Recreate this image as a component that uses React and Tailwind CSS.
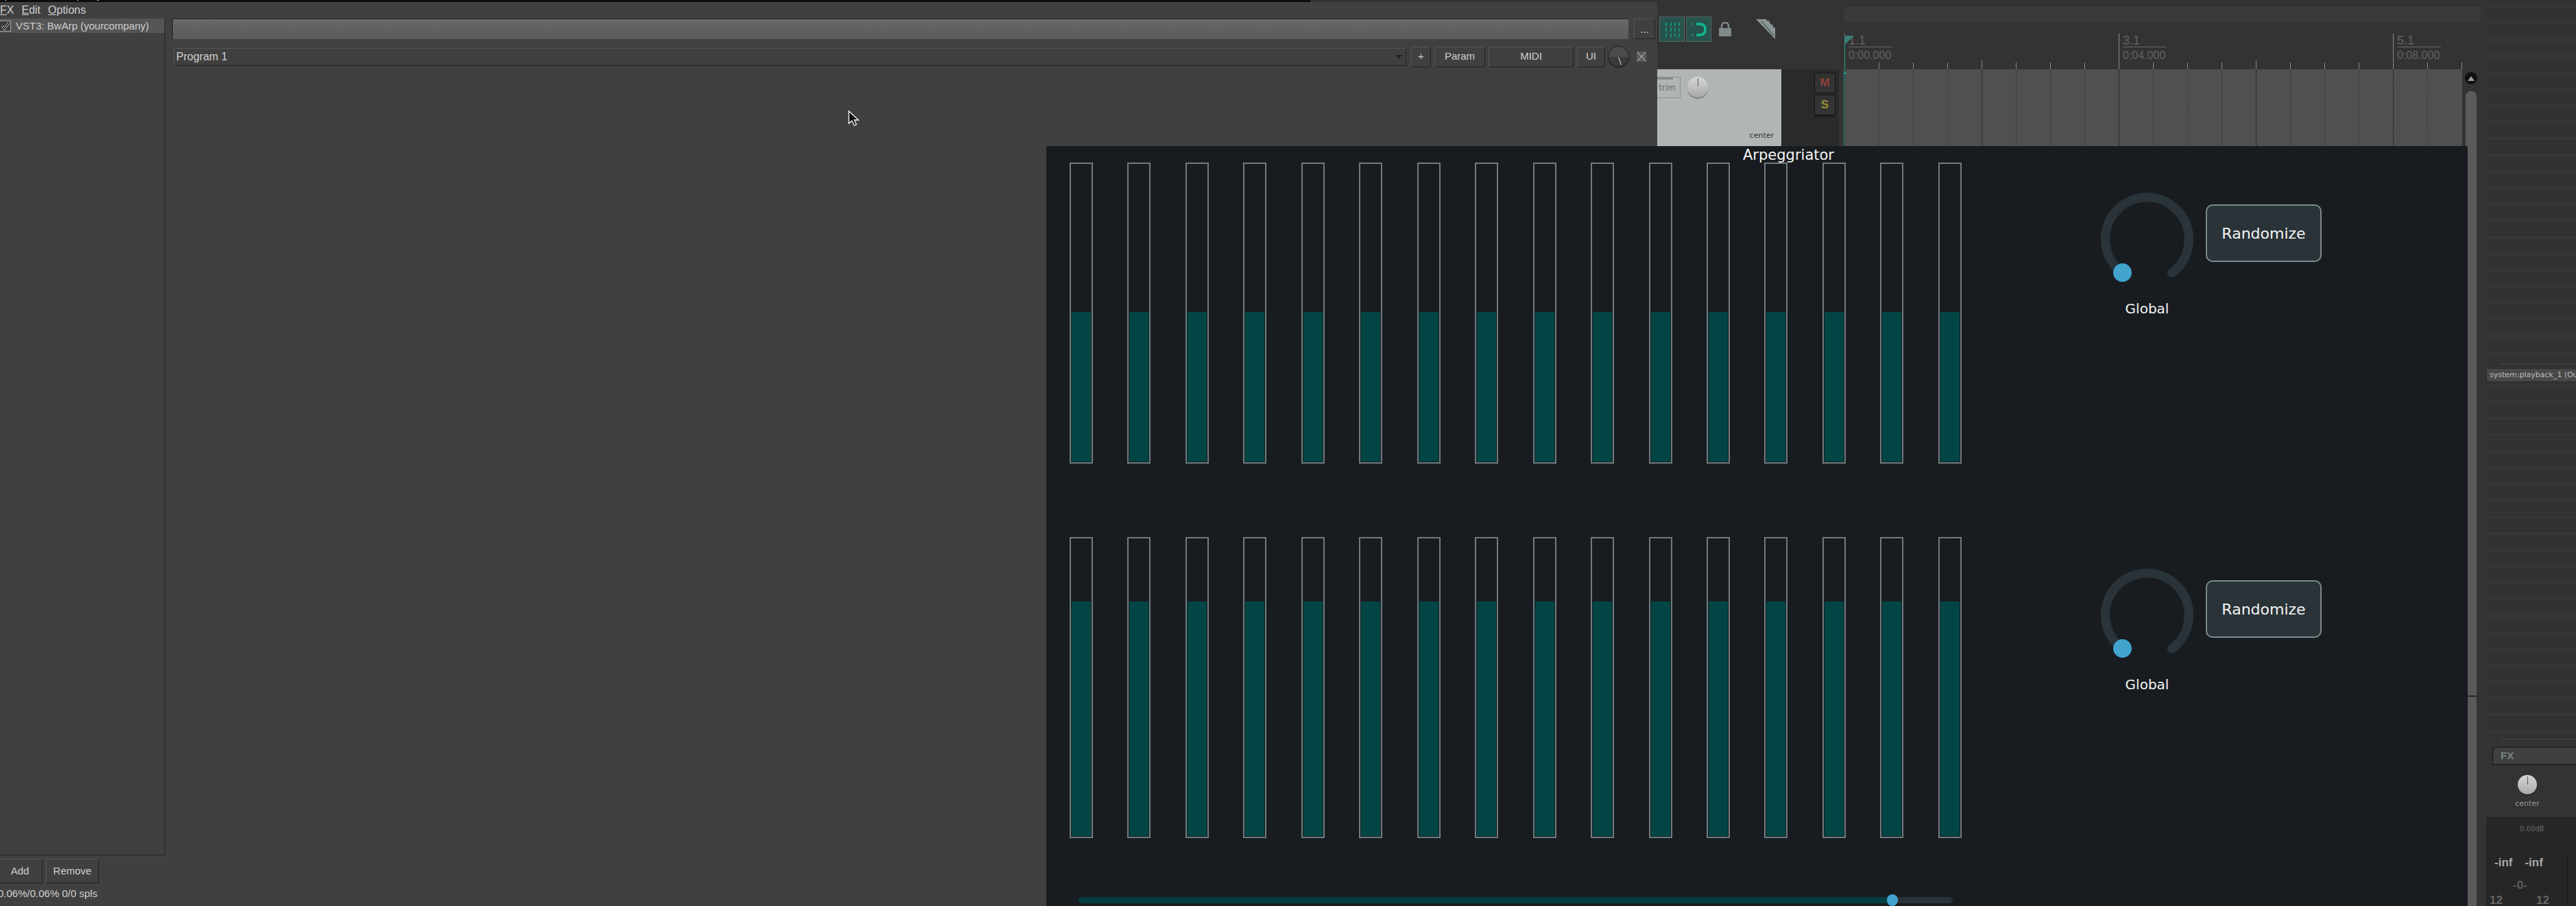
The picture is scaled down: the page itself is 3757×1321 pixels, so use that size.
const ticks = Array.from({ length: 19 }, (_, i) => i);
const bars = Array.from({ length: 16 }, (_, i) => i);
const labels = {
  0: ['1.1', '0:00.000'],
  8: ['3.1', '0:04.000'],
  16: ['5.1', '0:08.000'],
};

function Btn({ className, children }) {
  return (
    <div className={`flex items-center justify-center border border-t-[#555] border-l-[#555] border-r-[#222] border-b-[#222] bg-[#404040] text-[15px] text-[#d0d0d0] ${className}`}>
      {children}
    </div>
  );
}

function Knob({ className, line }) {
  return (
    <div className={`relative rounded-full bg-gradient-to-b from-[#d6d6d6] to-[#a9a9a9] shadow-[0_2px_1px_#2226] ${className}`}>
      <div className={`absolute left-1/2 top-[2px] h-[12px] w-px ${line}`} />
    </div>
  );
}

function RulerCell({ i }) {
  const label = labels[i];
  if (label) {
    return (
      <div className={`relative h-[52px] w-[50px] shrink-0 border-l ${i === 0 ? 'border-[#777]' : 'border-[#8a8a8a]'}`}>
        <div className="pl-[5px] pt-[1px] whitespace-nowrap font-['Liberation_Sans',sans-serif] text-[#626262]">
          <div className="h-[18px] text-[18px] leading-[18px]">{label[0]}</div>
          <div className="h-px w-[64px] bg-[#686868]" />
          <div className="mt-[4px] text-[16px] leading-[16px]">{label[1]}</div>
        </div>
        {i === 0 && (
          <>
            <div className="absolute -left-px top-[16px] h-[36px] w-px bg-[#1fa08c]" />
            <svg className="absolute -left-px top-[3px]" width="14" height="14" viewBox="0 0 14 14">
              <path d="M0 0H14L0 14Z" fill="#3b7f75" />
            </svg>
          </>
        )}
      </div>
    );
  }
  return <div className={`w-[50px] shrink-0 border-l border-[#8a8a8a] ${i % 4 === 0 ? 'h-[13px]' : 'h-[10px]'}`} />;
}

function Toolbar() {
  return (
    <div className="flex h-[101px] items-start pl-[3px] pt-[24px]">
      <div className="flex h-[37px] w-[37px] items-center justify-center border border-[#56635f] bg-[#27534c]">
        <svg width="24" height="24" viewBox="0 0 24 24" stroke="#17a387" strokeWidth="1.5" strokeDasharray="5 3">
          <path d="M3 2V23M10 2V23M16 2V23M22 2V23" />
        </svg>
      </div>
      <div className="ml-[2px] flex h-[37px] w-[37px] items-center justify-center border border-[#56635f] bg-[#27534c]">
        <svg width="26" height="26" viewBox="0 0 26 26" fill="none" stroke="#12b892" strokeWidth="3.5">
          <path d="M3 5H4M3 21H4M9 5H14Q22 5 22 13Q22 21 14 21H9" />
        </svg>
      </div>
      <svg className="ml-[11px] mt-[8px]" width="18" height="21" viewBox="0 0 18 21">
        <path d="M4 10V6A5 5 0 0 1 14 6V10" fill="none" stroke="#808a8a" strokeWidth="2.5" />
        <rect x="0" y="9" width="18" height="12" fill="#808a8a" />
      </svg>
      <svg className="ml-[36px] mt-[4px]" width="28" height="29" viewBox="0 0 28 29">
        <path d="M0 0H15L17 3L19 2L21 7L24 8L25 11L28 13V29Z" fill="#8a9595" />
        <path d="M8 3L26 24" stroke="#5a6262" strokeWidth="1.5" />
      </svg>
    </div>
  );
}

function TrackPanel() {
  return (
    <div className="flex h-[112px]">
      <div className="relative w-[181px] bg-[#b1b6b4] font-['DejaVu_Sans',sans-serif]">
        <div className="flex pt-[11px]">
          <div className="relative flex h-[31px] w-[34px] items-center justify-end border border-l-0 border-[#8b908e] pr-[6px] text-[12px] text-[#666b69]">
            <div className="absolute left-0 top-0 h-[3px] w-[23px] bg-[#8a8a8a]" />
            trim
          </div>
          <Knob className="ml-[10px] h-[30px] w-[30px]" line="bg-[#555]" />
        </div>
        <div className="absolute bottom-[8px] right-[11px] text-[11px] leading-[14px] text-[#333]">center</div>
      </div>
      <div className="flex w-[84px] flex-col items-end bg-[#2a2a2a] pr-[5px] pt-[5px] font-['Liberation_Sans',sans-serif] text-[17px] font-bold">
        <div className="flex h-[30px] w-[31px] items-center justify-center border border-[#141414] bg-[#333] text-[#8f423c]">M</div>
        <div className="mt-[2px] flex h-[30px] w-[31px] items-center justify-center border border-[#141414] bg-[#333] text-[#98903a] shadow-[0_3px_0_#1f1f1f]">S</div>
      </div>
      <div className="w-[8px] bg-[#333]" />
    </div>
  );
}

function Arrange() {
  return (
    <div className="w-[901px] shrink-0">
      <div className="relative h-[101px]">
        <div className="absolute left-0 top-[10px] h-[22px] w-[928px] bg-[#3a3a3a]" />
        <div className="flex h-full items-end">
          {ticks.map((i) => (
            <RulerCell key={i} i={i} />
          ))}
        </div>
      </div>
      <div className="relative flex h-[112px] bg-[#505050]">
        <div className="absolute -left-px top-0 h-full w-px bg-[#1fa08c]" />
        <div className="absolute left-0 top-[5px] h-[2px] w-[3px] bg-[#1fa08c]" />
        {ticks.slice(0, 18).map((i) => (
          <div key={i} className={`w-[50px] shrink-0 border-l border-dotted ${i % 4 === 0 ? 'border-[#111]' : 'border-[#2e2e2e]'}`} />
        ))}
      </div>
    </div>
  );
}

function Scrollbar() {
  return (
    <div className="relative ml-[5px] flex w-[16px] shrink-0 flex-col items-center pt-[105px]">
      <div className="flex h-[18px] w-[18px] shrink-0 items-center justify-center rounded-full bg-[#111]">
        <div className="h-0 w-0 border-x-[5px] border-b-[7px] border-x-transparent border-b-[#999]" />
      </div>
      <div className="mt-[10px] w-full flex-1 rounded-t-[7px] bg-[#5a5a5a]" />
      <div className="absolute -left-[8px] top-[1014px] h-[2px] w-[24px] bg-[#2a2a2a]" />
    </div>
  );
}

function Mixer() {
  return (
    <div className="ml-[14px] flex w-[131px] shrink-0 flex-col overflow-hidden font-['DejaVu_Sans',sans-serif]">
      <div className="relative h-[1077px] shrink-0 bg-[repeating-linear-gradient(180deg,#363636_8px,#363636_12px,#323232_12px,#323232_32px)]">
        <div className="absolute left-[21px] right-0 top-[530px] h-px bg-[#484848]" />
        <div className="absolute left-0 top-[537px] flex h-[20px] w-[160px] items-center whitespace-nowrap border border-[#2c2c2c] bg-[#484848] pl-[4px] text-[11px] text-[#bdbdbd]">
          system:playback_1 (Output)
        </div>
      </div>
      <div className="ml-[21px] h-px shrink-0 bg-[#484848]" />
      <div className="flex-1 bg-[#333]">
        <div className="ml-[9px] mt-[11px] flex h-[26px] w-[140px] items-center rounded-tl-[6px] border border-r-0 border-[#111] bg-[#404040] pl-[11px] font-['Liberation_Sans',sans-serif] text-[15px] font-bold text-[#7b8686]">
          FX
        </div>
        <div className="flex w-[120px] flex-col items-center pt-[15px]">
          <Knob className="h-[28px] w-[28px]" line="bg-[#555]" />
          <div className="mt-[7px] text-[11px] leading-[14px] text-[#9a9a9a]">center</div>
        </div>
        <div className="relative mt-[12px] h-[131px] bg-[#262626] pl-[5px] pt-[11px] font-['Liberation_Sans',sans-serif] font-bold">
          <div className="absolute left-[118px] top-[57px] h-[74px] w-px bg-[#1a1a1a]" />
          <div className="pl-[44px] font-['DejaVu_Sans',sans-serif] text-[10px] font-normal leading-[14px] text-[#6a6a6a]">0.00dB</div>
          <div className="mt-[32px] flex gap-[18px] pl-[7px] text-[17px] leading-[20px] text-[#a8a8a8]">
            <span>-inf</span>
            <span>-inf</span>
          </div>
          <div className="mt-[14px] pl-[34px] text-[17px] leading-[18px] text-[#5c5c5c]">-0-</div>
          <div className="mt-[4px] flex gap-[49px] text-[17px] leading-[18px] text-[#666]">
            <span>12</span>
            <span>12</span>
          </div>
        </div>
      </div>
    </div>
  );
}

function FxWindow() {
  return (
    <div className="absolute left-0 top-[3px] flex h-[1318px] w-[2417px] flex-col bg-[#404040] font-['Liberation_Sans',sans-serif] text-[15px] text-[#cfcfcf]">
      <div className="flex h-[24px] items-center gap-[11px] text-[16px] leading-none">
        <span><span className="underline">F</span>X</span>
        <span><span className="underline">E</span>dit</span>
        <span><span className="underline">O</span>ptions</span>
      </div>
      <div className="flex h-[1220px] shrink-0">
        <div className="w-[241px] shrink-0 border-b border-r border-[#222]">
          <div className="flex h-[21px] items-center bg-[#555] leading-none">
            <div className="flex h-[16px] w-[16px] items-center justify-center border border-l-0 border-[#aaa] bg-[#3a3a3a]">
              <svg width="14" height="14" viewBox="0 0 14 14" fill="none">
                <path d="M2 7L6 11L12 2" stroke="#fff" strokeWidth="3" />
                <path d="M2 7L6 11L12 2" stroke="#000" strokeWidth="1.5" />
              </svg>
            </div>
            <span className="ml-[7px] whitespace-nowrap">VST3: BwArp (yourcompany)</span>
          </div>
        </div>
        <div className="flex-1 pl-[10px]">
          <div className="flex h-[30px] items-start">
            <div className="h-[30px] w-[2124px] border-l border-t border-[#222] bg-gradient-to-b from-[#686868] to-[#5a5a5a]" />
            <Btn className="ml-[8px] h-[30px] w-[31px] items-end pb-[2px]">...</Btn>
          </div>
          <div className="mt-[10px] flex h-[31px] items-center">
            <div className="ml-[2px] flex h-[26px] w-[1798px] items-center justify-between border border-t-[#555] border-l-[#555] border-r-[#222] border-b-[#222] pl-[3px] pr-[5px] text-[16px]">
              Program 1
              <div className="h-0 w-0 border-x-[5px] border-t-[6px] border-x-transparent border-t-[#222]" />
            </div>
            <Btn className="ml-[7px] h-[30px] w-[29px]">+</Btn>
            <Btn className="ml-[5px] h-[30px] w-[74px]">Param</Btn>
            <Btn className="ml-[5px] h-[30px] w-[124px]">MIDI</Btn>
            <Btn className="ml-[5px] h-[30px] w-[41px]">UI</Btn>
            <div className="relative ml-[4px] h-[31px] w-[31px] shrink-0 rounded-full border border-[#222] bg-gradient-to-b from-[#4c4c4c] from-50% to-[#3a3a3a] to-50% shadow-[0_1px_0_#222]">
              <div className="absolute left-[16px] top-[15px] h-[12px] w-px -rotate-[20deg] bg-[#ddd]" />
            </div>
            <svg className="ml-[11px] shrink-0" width="14" height="15" viewBox="0 0 14 15">
              <rect width="14" height="15" fill="#5c5c5c" />
              <path d="M1 1L13 14M13 1L1 14" stroke="#ddd" strokeWidth="0.8" />
            </svg>
          </div>
        </div>
      </div>
      <div className="mt-[5px] flex">
        <Btn className="-ml-[4px] h-[36px] w-[66px]">Add</Btn>
        <Btn className="ml-[5px] h-[36px] w-[77px]">Remove</Btn>
      </div>
      <div className="-ml-[3px] mt-[6px] whitespace-nowrap leading-[18px]">0.06%/0.06% 0/0 spls</div>
    </div>
  );
}

function SequencerRow({ fillTop, knobTop, buttonTop }) {
  return (
    <div className="flex h-[439px] items-start pl-[34px]">
      <div className="flex h-full w-[1301px] justify-between">
        {bars.map((i) => (
          <div key={i} className="flex h-full w-[34px] flex-col justify-end border-2 border-[#6f7c7e] p-px">
            <div className={`bg-[#024545] ${fillTop}`} />
          </div>
        ))}
      </div>
      <div className={`ml-[203px] flex w-[135px] flex-col items-center ${knobTop}`}>
        <svg width="135" height="135" viewBox="0 0 135 135" fill="none">
          <path d="M31.5 117A61 61 0 1 1 103.5 117" stroke="#293338" strokeWidth="13.5" strokeLinecap="round" />
          <circle cx="31.5" cy="116.5" r="13.5" fill="#42a3cd" />
        </svg>
        <div className="mt-[22px] text-[20px] leading-[24px] text-[#f4f4f4]">Global</div>
      </div>
      <div className={`ml-[18px] flex h-[84px] w-[169px] items-center justify-center rounded-[10px] border-2 border-[#7d8a8c] bg-[#293338] text-[22px] text-[#f4f4f4] ${buttonTop}`}>
        Randomize
      </div>
    </div>
  );
}

function PluginWindow() {
  return (
    <div className="absolute left-[1526px] top-[213px] h-[1108px] w-[2073px] overflow-hidden bg-[#181c20] font-['DejaVu_Sans',sans-serif]">
      <div className="h-[24px] pl-[1016px] text-[21px] leading-[26px] text-[#f4f4f4]">Arpeggriator</div>
      <div className="flex flex-col gap-[107px]">
        <SequencerRow fillTop="h-[218px]" knobTop="mt-[44px]" buttonTop="mt-[61px]" />
        <SequencerRow fillTop="h-[342px]" knobTop="mt-[46px]" buttonTop="mt-[63px]" />
      </div>
      <div className="relative ml-[47px] mt-[86px] flex h-[9px] w-[1275px] overflow-visible rounded-full bg-[#293338]">
        <div className="h-full w-[1187px] rounded-l-full bg-[#013f3f]" />
        <div className="absolute left-[1179px] -top-[4px] h-[17px] w-[16px] rounded-full bg-[#42a3cd]" />
      </div>
    </div>
  );
}

export default function App() {
  return (
    <div className="relative h-[1321px] w-[3757px] overflow-hidden bg-[#333]">
      <div className="flex h-full pl-[2417px]">
        <div className="w-[273px] shrink-0">
          <Toolbar />
          <TrackPanel />
        </div>
        <Arrange />
        <Scrollbar />
        <Mixer />
      </div>
      <div className="absolute left-0 top-0 h-[3px] w-[1911px] overflow-hidden bg-[#0c0c0c]">
        <div className="-mt-[15px] whitespace-nowrap pl-[6px] font-['Liberation_Mono',monospace] text-[16px] leading-[18px] text-[#ccc]">p1 x1 1422 p1 y1 271</div>
      </div>
      <FxWindow />
      <PluginWindow />
      <svg className="absolute left-[1236px] top-[160px]" width="18" height="26" viewBox="0 0 18 26">
        <path d="M2 2V20L6.5 16L10 23L13 21.5L10 15L16 15Z" fill="#111" stroke="#fff" strokeWidth="1.3" />
      </svg>
    </div>
  );
}
